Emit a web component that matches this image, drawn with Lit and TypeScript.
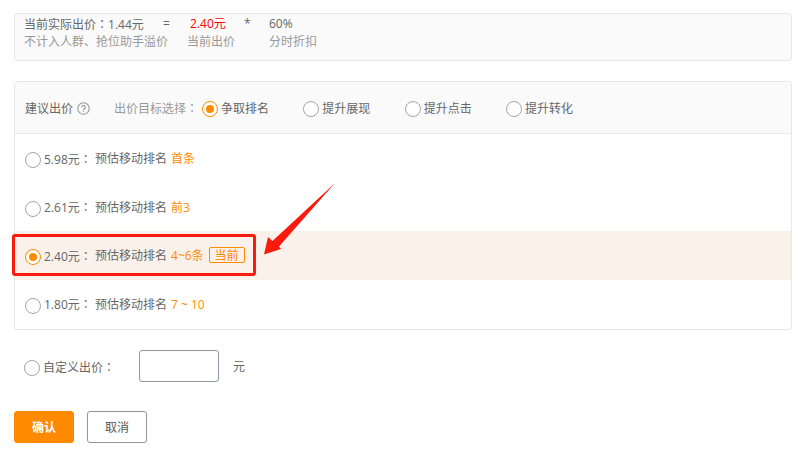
import { LitElement, html, css } from "lit";
import { customElement } from "lit/decorators.js";

const radio = (on = false) => html`<span class="radio ${on ? "on" : ""}"></span>`;
const colon = html`<span class="colon">：</span>`;

const rows = [
  { price: "5.98元", rank: "首条", cur: false },
  { price: "2.61元", rank: "前3", cur: false },
  { price: "2.40元", rank: "4~6条", cur: true },
  { price: "1.80元", rank: "7 ~ 10", cur: false },
];

@customElement("app-root")
export class AppRoot extends LitElement {
  static styles = css`
    :host {
      display: block;
      position: relative;
      width: 798px;
      height: 455px;
      overflow: hidden;
      background: #fff;
      box-sizing: border-box;
      padding: 13px 6px 0 14px;
      font: 12px/18px "Open Sans", "Noto Sans CJK SC", "Liberation Sans", sans-serif;
      color: #666;
    }
    * { box-sizing: border-box; }
    .colon { font-family: "Noto Sans CJK TC", sans-serif; }
    .summary {
      height: 48px;
      background: #fafafa;
      border: 1px solid #e8e8e8;
      border-radius: 3px;
      padding: 1px 0 0 9px;
      display: grid;
      grid-template-columns: 139px 24px 57px 25px auto;
      grid-auto-rows: 18px;
      align-content: start;
    }
    .wide { grid-column: span 2; }
    .muted { color: #999; }
    .red { color: #f00; padding-left: 3px; }
    .panel {
      margin-top: 20px;
      height: 249px;
      border: 1px solid #e8e8e8;
      border-radius: 3px;
    }
    .head {
      height: 52px;
      background: #fafafa;
      border-bottom: 1px solid #e8e8e8;
      display: flex;
      align-items: center;
      padding: 2px 0 0 10px;
    }
    .help {
      display: block;
      flex: none;
      margin-left: 4px;
    }
    .goal-label { color: #999; margin-left: 24px; width: 88px; }
    .goal { display: flex; align-items: center; width: 101.33px; white-space: nowrap; }
    .radio {
      flex: none;
      width: 16px;
      height: 16px;
      border: 1px solid #a5a5a5;
      border-radius: 50%;
      background: #fff;
      margin-right: 3px;
      display: grid;
      place-items: center;
    }
    .radio.on { border-color: #ff8a00; }
    .radio.on::after {
      content: "";
      width: 8px;
      height: 8px;
      border-radius: 50%;
      background: #ff8a00;
    }
    .row {
      height: 48.5px;
      display: flex;
      align-items: center;
      padding: 2px 0 0 10px;
      white-space: nowrap;
    }
    .row .radio, .custom .radio { margin-top: 2px; }
    .row.cur { background: #f9f1ea; }
    .price { width: 51px; }
    .rank { color: #ff8a00; margin-left: 4px; }
    .tag {
      height: 16px;
      width: 36px;
      margin: -2px 0 0 5px;
      padding-top: 1px;
      border: 1px solid #ff8a00;
      border-radius: 2px;
      color: #ff8a00;
      line-height: 13px;
      text-align: center;
    }
    .custom {
      display: flex;
      align-items: center;
      height: 32px;
      margin-top: 20px;
      padding-left: 10px;
    }
    .custom .radio { margin-top: 4px; }
    .custom-label, .unit { padding-top: 2px; }
    .custom-label { width: 96px; }
    .input {
      width: 80px;
      height: 32px;
      border: 1px solid #8f95a3;
      border-radius: 3px;
      margin-right: 14px;
      background: #fff;
    }
    .actions { display: flex; gap: 13px; margin-top: 29px; }
    .btn {
      width: 60px;
      height: 32px;
      padding-top: 2px;
      border-radius: 3px;
      display: grid;
      place-items: center;
      border: 1px solid #8f95a3;
      color: #555;
      background: #fff;
    }
    .btn.primary {
      background: #ff8a00;
      border-color: #ff8a00;
      color: #fff;
      font-weight: 700;
    }
    .mark {
      position: absolute;
      left: 12px;
      top: 234px;
      width: 244px;
      height: 42px;
      border: 3px solid #fb1a0e;
      border-radius: 3px;
    }
    .arrow { position: absolute; left: 0; top: 0; pointer-events: none; }
  `;

  render() {
    return html`
      <div class="summary">
        <span>当前实际出价${colon}1.44元</span>
        <span>=</span>
        <span class="red">2.40元</span>
        <span>*</span>
        <span>60%</span>
        <span class="muted wide">不计入人群、抢位助手溢价</span>
        <span class="muted">当前出价</span>
        <span></span>
        <span class="muted">分时折扣</span>
      </div>
      <div class="panel">
        <div class="head">
          <span>建议出价</span>
          <svg class="help" width="13" height="13" viewBox="0 0 13 13" fill="none" stroke="#999">
            <circle cx="6.5" cy="6.5" r="5.7" stroke-width="1.1" />
            <path d="M4.7 5.2a1.8 1.8 0 1 1 2.7 1.6c-.6.4-.9.7-.9 1.4" stroke-width="1.1" />
            <path d="M6.5 9.2v1.1" stroke-width="1.1" />
          </svg>
          <span class="goal-label">出价目标选择${colon}</span>
          <span class="goal">${radio(true)}争取排名</span>
          <span class="goal">${radio()}提升展现</span>
          <span class="goal">${radio()}提升点击</span>
          <span class="goal">${radio()}提升转化</span>
        </div>
        ${rows.map(
          (r) => html`<div class="row ${r.cur ? "cur" : ""}">
            ${radio(r.cur)}
            <span class="price">${r.price}${colon}</span>
            <span>预估移动排名</span>
            <span class="rank">${r.rank}</span>
            ${r.cur ? html`<span class="tag">当前</span>` : ""}
          </div>`
        )}
      </div>
      <div class="custom">
        ${radio()}
        <span class="custom-label">自定义出价${colon}</span>
        <span class="input"></span>
        <span class="unit">元</span>
      </div>
      <div class="actions">
        <span class="btn primary">确认</span>
        <span class="btn">取消</span>
      </div>
      <div class="mark"></div>
      <svg class="arrow" width="798" height="455" viewBox="0 0 798 455">
        <path d="M335 183 L279 246.5 L281 249 L264 254.5 L268 237 L272.5 241 Z" fill="#fb1a0e" />
      </svg>
    `;
  }
}
